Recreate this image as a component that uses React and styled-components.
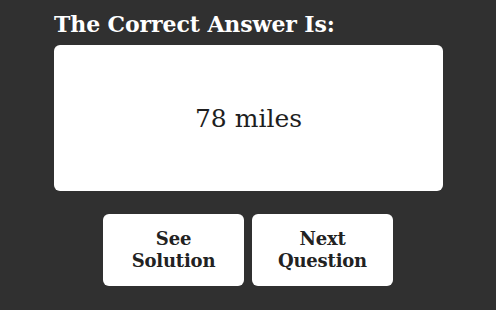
import React from 'react';
import styled, { createGlobalStyle } from 'styled-components';

const Global = createGlobalStyle`
  html, body {
    margin: 0;
    padding: 0;
    background: #303030;
  }
`;

const Page = styled.div`
  width: 496px;
  height: 310px;
  box-sizing: border-box;
  padding: 10px 53px 0 54px;
  display: flex;
  flex-direction: column;
  align-items: stretch;
`;

const Title = styled.h1`
  margin: 0;
  font-family: 'DejaVu Serif', serif;
  font-weight: bold;
  font-size: 22px;
  line-height: 29px;
  letter-spacing: -0.1px;
  color: #fff;
`;

const AnswerBox = styled.div`
  margin-top: 6px;
  height: 146px;
  background: #fff;
  border-radius: 6px;
  display: flex;
  align-items: center;
  justify-content: center;
  font-family: 'DejaVu Serif', serif;
  font-size: 25px;
  color: #1e1e1e;
`;

const Actions = styled.div`
  margin-top: 23px;
  padding-left: 49px;
  display: flex;
  gap: 8px;
`;

const Button = styled.button`
  width: 141px;
  height: 72px;
  background: #fff;
  border: none;
  border-radius: 6px;
  font-family: 'DejaVu Serif', serif;
  font-weight: bold;
  font-size: 18px;
  line-height: 22px;
  letter-spacing: -0.2px;
  color: #222;
  padding: 0;
`;

const App = () => (
  <>
    <Global />
    <Page>
      <Title>The Correct Answer Is:</Title>
      <AnswerBox>78 miles</AnswerBox>
      <Actions>
        <Button>
          See
          <br />
          Solution
        </Button>
        <Button>
          Next
          <br />
          Question
        </Button>
      </Actions>
    </Page>
  </>
);

export default App;
